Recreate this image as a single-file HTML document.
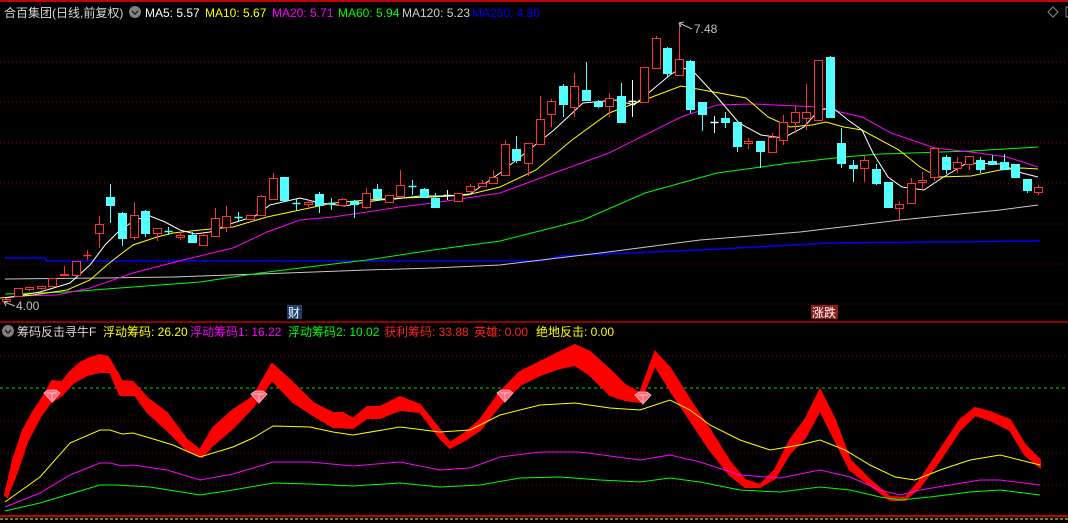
<!DOCTYPE html>
<html><head><meta charset="utf-8"><style>
html,body{margin:0;padding:0;background:#000;width:1068px;height:523px;overflow:hidden}
svg{display:block}
text{font-family:"Liberation Sans","Noto Sans CJK SC",sans-serif;font-size:12px}
</style></head><body>
<svg id="s" width="1068" height="523" xmlns="http://www.w3.org/2000/svg">
<rect width="1068" height="523" fill="#000"/>
<g id="grid"></g>
<line x1="0" y1="1" x2="1068" y2="1" stroke="#c00000" stroke-width="2"/>
<line x1="40" y1="0" x2="40" y2="5" stroke="#c00000"/>
<line x1="0" y1="322" x2="1068" y2="322" stroke="#c00000" stroke-width="1.5"/>
<g id="ma"></g>
<g id="cd"></g>
<g id="low"></g>
<text x="4" y="17" fill="#d8d8d8" font-size="13">合百集团(日线,前复权)</text>
<circle cx="135" cy="12" r="6" fill="#808080"/><path d="M132 11 L135 14 L138 11" stroke="#222" stroke-width="1.5" fill="none"/>
<text x="145" y="17" fill="#fff">MA5: 5.57</text>
<text x="205" y="17" fill="#ffff00">MA10: 5.67</text>
<text x="272" y="17" fill="#ff00ff">MA20: 5.71</text>
<text x="338" y="17" fill="#00ff00">MA60: 5.94</text>
<text x="402" y="17" fill="#d0d0d0">MA120: 5.23</text>
<text x="472" y="17" fill="#0000ff">MA250: 4.80</text>
<path d="M1053 7 L1058 12 L1053 17 L1048 12 Z" stroke="#888" fill="none"/>
<rect x="1066" y="7" width="4" height="10" stroke="#888" fill="none"/>
<text x="694" y="33" fill="#c0c0c0">7.48</text>
<path d="M679 23 L692 29 M679 23 L684 22 M679 23 L681 27" stroke="#c0c0c0" fill="none"/>
<text x="16" y="310" fill="#c0c0c0">4.00</text>
<path d="M4 302 L15 306 M4 302 L8 301 M4 302 L6 306" stroke="#c0c0c0" fill="none"/>
<rect x="287" y="305" width="15" height="14" fill="#1f3f70"/><text x="288" y="317" fill="#fff">财</text>
<rect x="811" y="305" width="27" height="14" fill="#8b1c1c"/><text x="812" y="317" fill="#fff">涨跌</text>
<circle cx="8" cy="331" r="6" fill="#808080"/><path d="M5 330 L8 333 L11 330" stroke="#222" stroke-width="1.5" fill="none"/>
<text x="17" y="336" fill="#d8d8d8">筹码反击寻牛F</text>
<text x="103" y="336" fill="#ffff00">浮动筹码: 26.20</text>
<text x="190" y="336" fill="#ff00ff">浮动筹码1: 16.22</text>
<text x="288" y="336" fill="#00ff00">浮动筹码2: 10.02</text>
<text x="384" y="336" fill="#ff2020">获利筹码: 33.88</text>
<text x="474" y="336" fill="#ff2020">英雄: 0.00</text>
<text x="536" y="336" fill="#ffff00">绝地反击: 0.00</text>
</svg>
<script>
var NS="http://www.w3.org/2000/svg";
function el(p,t,a){var e=document.createElementNS(NS,t);for(var k in a)e.setAttribute(k,a[k]);document.getElementById(p).appendChild(e);return e;}
// grid
[62,102,143,183,224,264,304,356,421,453,485].forEach(function(y){el('grid','line',{x1:0,y1:y,x2:1068,y2:y,stroke:'#8a0000','stroke-dasharray':'1 3'});});
el('grid','line',{x1:0,y1:388,x2:1068,y2:388,stroke:'#00dd00','stroke-dasharray':'3 3'});
el('grid','line',{x1:0,y1:516,x2:1068,y2:516,stroke:'#ff0000','stroke-width':1.5});
el('grid','line',{x1:0,y1:519,x2:1068,y2:519,stroke:'#ffff00','stroke-dasharray':'3 2'});
function pl(g,pts,c,w){el(g,'polyline',{points:pts.map(function(p){return p.join(',')}).join(' '),fill:'none',stroke:c,'stroke-width':w||1});}
// MAs
pl('ma',[[5,258],[45,258],[46,261],[540,261],[560,256],[700,250],[830,243],[1040,241]],'#0000ff',1.5);
pl('ma',[[5,279],[100,278],[173,277],[260,274],[367,270],[433,268],[500,265],[600,253],[700,240],[800,232],[900,220],[1000,210],[1038,205]],'#c8c8c8');
pl('ma',[[5,294],[67,292],[133,287],[200,282],[260,273],[300,268],[367,260],[433,250],[500,241],[583,220],[645,193],[717,173],[790,163],[844,157],[880,154],[971,151],[1038,147]],'#00ff00');
pl('ma',[[5,298],[20,296],[57,295],[90,288],[133,273],[183,260],[233,248],[267,232],[300,220],[333,217],[367,212],[400,207],[433,203],[467,198],[500,193],[554,173],[609,153],[645,135],[681,117],[717,105],[754,104],[819,107],[862,117],[891,133],[935,148],[971,152],[1007,157],[1038,167]],'#ff00ff');
pl('ma',[[0,298],[33,295],[67,290],[90,280],[107,265],[117,257],[133,245],[157,237],[173,233],[200,230],[233,227],[267,217],[300,210],[333,203],[367,200],[400,198],[433,197],[467,195],[500,187],[536,170],[572,140],[609,113],[652,97],[681,86],[703,90],[746,98],[768,117],[790,127],[812,125],[826,122],[844,127],[862,130],[899,150],[920,167],[938,177],[971,176],[1000,170],[1022,168],[1038,169]],'#ffff00');
pl('ma',[[5,298],[40,292],[70,283],[90,265],[105,245],[118,232],[135,220],[150,216],[165,222],[180,230],[195,234],[210,232],[230,224],[255,216],[270,205],[300,198],[320,203],[345,206],[360,203],[380,200],[395,199],[420,196],[445,196],[470,194],[500,173],[554,130],[583,103],[616,100],[634,105],[652,90],[670,75],[681,68],[692,70],[717,97],[739,123],[761,135],[783,138],[804,127],[819,110],[833,108],[848,120],[862,130],[873,153],[888,177],[902,187],[924,190],[942,178],[967,163],[1000,164],[1022,173],[1038,177]],'#ffffff');
// candles: [top,bottom,high,low,type] type r=red c=cyan w=white cross
var C=[[299,301,298,302,'r'],[288,296,288,296,'r'],[287,289,287,291,'r'],[286,288,286,290,'r'],[278,286,278,286,'r'],[274,275,266,275,'r'],[261,275,261,275,'r'],[255,255,250,260,'r'],[224,233,216,248,'r'],[197,205,184,223,'c'],[213,238,212,246,'c'],[215,237,202,240,'r'],[211,233,210,237,'c'],[228,233,228,241,'r'],[231,231,227,235,'c'],[235,237,232,240,'r'],[235,242,232,243,'c'],[235,245,233,245,'r'],[218,236,208,236,'r'],[216,227,206,232,'r'],[217,217,212,222,'c'],[215,219,215,219,'r'],[196,215,195,215,'r'],[178,199,173,199,'r'],[177,200,177,202,'c'],[203,203,199,211,'c'],[202,204,199,207,'r'],[194,205,192,213,'c'],[203,203,198,210,'c'],[199,205,198,205,'r'],[201,204,200,218,'c'],[193,207,188,209,'r'],[189,198,184,198,'c'],[195,202,195,202,'r'],[185,196,170,196,'r'],[186,186,180,195,'c'],[189,197,188,197,'c'],[198,207,193,207,'c'],[195,195,190,200,'w'],[193,201,193,202,'r'],[186,191,184,191,'r'],[183,186,180,186,'r'],[177,183,170,183,'r'],
[144,175,140,175,'r'],[149,160,136,163,'c'],[143,163,143,176,'r'],[119,144,96,144,'r'],[101,114,99,127,'r'],[86,104,84,117,'c'],[86,107,73,117,'r'],[90,100,62,100,'c'],[102,106,100,108,'c'],[98,106,93,117,'r'],[96,122,83,122,'c'],[101,101,80,117,'w'],[67,102,67,102,'r'],[38,68,36,68,'r'],[48,73,47,77,'c'],[59,75,23,75,'r'],[61,109,60,113,'c'],[102,114,102,131,'c'],[122,122,116,133,'w'],[118,122,112,128,'c'],[122,146,122,152,'c'],[141,143,138,149,'r'],[141,151,141,168,'c'],[137,152,133,152,'r'],[122,140,115,145,'r'],[112,122,106,133,'r'],[112,118,84,130,'r'],[60,120,60,120,'r'],[57,117,56,117,'c'],[143,163,128,168,'c'],[165,168,160,182,'c'],[160,168,156,182,'r'],[169,183,164,185,'c'],[182,207,182,207,'c'],[204,208,201,220,'r'],[183,203,178,203,'r'],[180,182,172,190,'r'],[148,177,148,181,'r'],[157,169,155,174,'c'],[162,168,157,173,'r'],[156,164,156,170,'r'],[160,169,157,173,'c'],[161,164,155,164,'c'],[162,169,154,169,'c'],[164,177,164,177,'c'],[179,190,179,193,'c'],[187,192,185,195,'r']];
C.forEach(function(c,i){var x=Math.round(6+11.6*i)+0.5;var col=c[4]=='r'?'#ff3232':(c[4]=='c'?'#54ffff':'#ffffff');
 el('cd','line',{x1:x,y1:c[2],x2:x,y2:c[3],stroke:col});
 if(c[1]-c[0]<1){el('cd','line',{x1:x-4,y1:c[0]+0.5,x2:x+4,y2:c[0]+0.5,stroke:col,'stroke-width':1.5});}
 else if(c[4]=='r'){el('cd','rect',{x:x-4,y:c[0]+0.5,width:8,height:c[1]-c[0],fill:'#000',stroke:col});}
 else el('cd','rect',{x:x-4.5,y:c[0],width:9,height:c[1]-c[0]+1,fill:col});
});
// lower panel
var T=[[5,495],[13,460],[23,430],[33,412],[43,397],[52,381],[62,382],[70,372],[80,363],[90,358],[100,355],[108,357],[122,381],[133,382],[147,398],[167,413],[187,440],[200,450],[213,428],[233,410],[253,397],[272,364],[290,380],[313,403],[333,413],[343,413],[353,419],[367,407],[380,407],[400,397],[420,405],[440,430],[450,443],[465,433],[480,420],[500,392],[520,372],[540,362],[560,352],[575,345],[590,352],[610,370],[625,385],[640,393],[655,352],[670,368],[690,400],[710,430],[730,462],[745,480],[760,485],[775,470],[790,440],[805,420],[820,390],[835,420],[850,460],[870,480],[890,497],[905,498],[920,480],[940,450],[960,420],[975,408],[990,412],[1010,420],[1025,445],[1040,460]];
var B=[[7,497],[17,472],[27,442],[40,417],[50,403],[62,395],[73,383],[87,375],[100,372],[110,372],[120,395],[135,395],[147,412],[167,430],[187,450],[202,457],[213,445],[233,428],[253,407],[272,380],[293,402],[313,415],[333,427],[353,428],[367,418],[380,418],[400,410],[420,412],[440,438],[450,448],[465,440],[480,430],[500,405],[520,385],[540,375],[560,368],[575,365],[590,375],[610,395],[625,400],[640,402],[655,365],[670,390],[690,420],[710,450],[730,475],[745,487],[760,487],[775,478],[790,453],[805,438],[820,410],[835,440],[850,470],[870,485],[890,500],[905,500],[920,487],[940,460],[960,430],[975,415],[990,420],[1010,430],[1025,455],[1040,467]];
el('low','polygon',{points:T.concat(B.slice().reverse()).map(function(p){return p.join(',')}).join(' '),fill:'#ff0000',stroke:'#ff0000','stroke-width':2});
pl('low',[[5,511],[40,503],[70,494],[100,485],[115,485],[150,487],[200,495],[233,490],[273,483],[310,484],[353,486],[400,483],[440,487],[480,485],[520,478],[560,477],[600,480],[640,482],[670,478],[700,482],[740,490],[780,492],[820,487],[850,490],[880,497],[900,500],[930,497],[970,492],[1000,490],[1040,495]],'#00ff00');
pl('low',[[5,507],[40,493],[70,475],[100,463],[110,463],[122,466],[133,465],[167,470],[200,480],[233,474],[253,468],[273,462],[310,462],[353,466],[400,462],[440,470],[470,468],[500,457],[540,452],[580,452],[610,456],[640,460],[670,455],[700,462],[740,475],[780,478],[820,470],[850,477],[880,490],[900,495],[920,490],[950,485],[980,480],[1000,480],[1040,485]],'#ff00ff');
pl('low',[[5,502],[40,477],[70,443],[100,430],[110,430],[122,434],[133,433],[150,438],[173,445],[200,457],[233,447],[253,438],[273,426],[310,427],[333,432],[353,435],[400,427],[440,432],[470,430],[500,415],[540,405],[575,403],[610,408],[640,410],[670,400],[690,410],[710,425],[740,440],[770,450],[800,445],[820,440],[845,450],[870,465],[895,477],[915,480],[940,470],[970,460],[1000,455],[1020,460],[1040,465]],'#ffff00');
[[52,396],[259,397],[505,396],[643,398]].forEach(function(p){var x=p[0],y=p[1];
 el('low','polygon',{points:(x-8)+','+(y-3)+' '+(x-4)+','+(y-6)+' '+(x+4)+','+(y-6)+' '+(x+8)+','+(y-3)+' '+x+','+(y+6),fill:'#ff6a7a',stroke:'#ffc0c8','stroke-width':0.8});
 el('low','path',{d:'M'+(x-5)+' '+(y-3)+' L'+(x+5)+' '+(y-3)+' M'+x+' '+(y-3)+' L'+x+' '+(y+4),stroke:'#ffd0d8','stroke-width':0.8,fill:'none'});});
</script>
</body></html>
